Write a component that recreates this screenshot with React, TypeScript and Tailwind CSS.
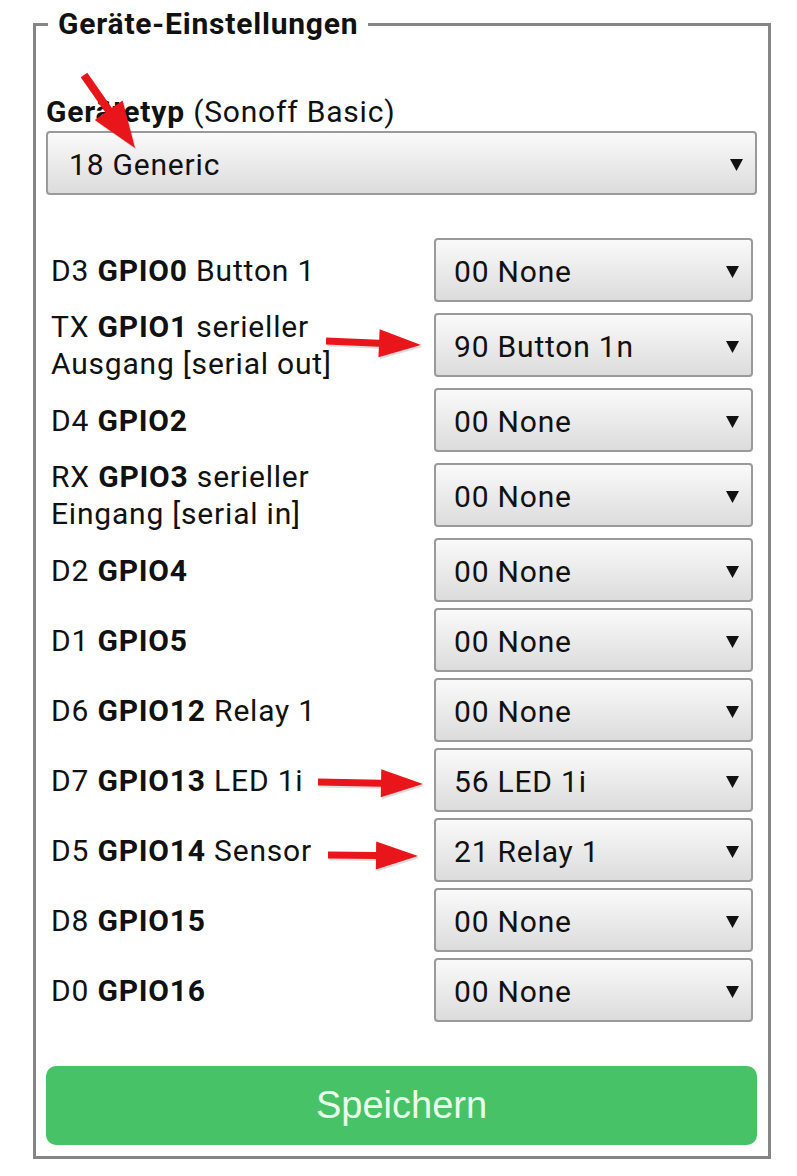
import React from 'react';

type Row = {
  pin: string;
  gpio: string;
  name?: string;
  second?: string;
  value: string;
};

const rows: Row[] = [
  { pin: 'D3', gpio: 'GPIO0', name: 'Button 1', value: '00 None' },
  { pin: 'TX', gpio: 'GPIO1', name: 'serieller', second: 'Ausgang [serial out]', value: '90 Button 1n' },
  { pin: 'D4', gpio: 'GPIO2', value: '00 None' },
  { pin: 'RX', gpio: 'GPIO3', name: 'serieller', second: 'Eingang [serial in]', value: '00 None' },
  { pin: 'D2', gpio: 'GPIO4', value: '00 None' },
  { pin: 'D1', gpio: 'GPIO5', value: '00 None' },
  { pin: 'D6', gpio: 'GPIO12', name: 'Relay 1', value: '00 None' },
  { pin: 'D7', gpio: 'GPIO13', name: 'LED 1i', value: '56 LED 1i' },
  { pin: 'D5', gpio: 'GPIO14', name: 'Sensor', value: '21 Relay 1' },
  { pin: 'D8', gpio: 'GPIO15', value: '00 None' },
  { pin: 'D0', gpio: 'GPIO16', value: '00 None' },
];

const Caret = () => (
  <svg width="13" height="12" viewBox="0 0 13 12" className="shrink-0">
    <polygon points="0,0 13,0 6.5,12" fill="#111" />
  </svg>
);

const FakeSelect = ({ value, className }: { value: string; className: string }) => (
  <div
    className={`flex items-center justify-between h-[64px] pl-[18px] pr-[12px] pt-[3px] rounded-[4px] border-2 border-[#9a9a9a] bg-gradient-to-b from-[#fafafa] to-[#dcdcdc] text-[30px] tracking-[0.8px] text-[#111] ${className}`}
  >
    <span>{value}</span>
    <Caret />
  </div>
);

// red annotation arrow: tail -> tip
const Arrow = ({ x1, y1, x2, y2, head = 42, hw = 14, sw = 3.5 }: { x1: number; y1: number; x2: number; y2: number; head?: number; hw?: number; sw?: number }) => {
  const dx = x2 - x1;
  const dy = y2 - y1;
  const len = Math.sqrt(dx * dx + dy * dy);
  const ux = dx / len;
  const uy = dy / len;
  const nx = -uy;
  const ny = ux;
  const bx = x2 - ux * head;
  const by = y2 - uy * head;
  const pts = [
    [x1 + nx * sw, y1 + ny * sw],
    [bx + nx * sw, by + ny * sw],
    [bx + nx * hw, by + ny * hw],
    [x2, y2],
    [bx - nx * hw, by - ny * hw],
    [bx - nx * sw, by - ny * sw],
    [x1 - nx * sw, y1 - ny * sw],
  ]
    .map((p) => p.join(','))
    .join(' ');
  return (
    <g>
      <polygon points={pts} fill="#00000022" transform="translate(1.5,2)" />
      <polygon points={pts} fill="#e8161b" />
    </g>
  );
};

export default function App() {
  return (
    <div className="relative w-[797px] h-[1176px] bg-white font-['Roboto',sans-serif] text-[#111]">
      <div className="pt-[9px] pl-[33px] w-[771px]">
        <fieldset className="border-[3px] border-[#858585] pl-[10px] pr-[11px] pb-[11px]">
          <legend className="ml-[2px] px-[10px] text-[30px] tracking-[0.8px] leading-[30px] font-bold">
            Geräte-Einstellungen
          </legend>

          <div className="mt-[56px] text-[30px] tracking-[0.8px] leading-[34px]">
            <b>Gerätetyp</b> (Sonoff Basic)
          </div>
          <FakeSelect value="18 Generic" className="mt-[2px] pl-[21px]" />

          <div className="mt-[40px]">
            {rows.map((r, i) => (
              <div key={i} className="flex items-center py-[3px]">
                <div className="flex-1 pl-[5px] text-[30px] tracking-[0.8px] leading-[37px]">
                  {r.pin} <b>{r.gpio}</b>
                  {r.name ? ' ' + r.name : ''}
                  {r.second && (
                    <>
                      <br />
                      {r.second}
                    </>
                  )}
                </div>
                <FakeSelect value={r.value} className="w-[319px] mr-[4px]" />
              </div>
            ))}
          </div>

          <button className="mt-[41px] w-full h-[79px] rounded-[10px] bg-[#47c266] text-[#eaffea] text-[38px] font-['Liberation_Sans',sans-serif]">
            Speichern
          </button>
        </fieldset>
      </div>

      <svg className="absolute inset-0 pointer-events-none" width="797" height="1176">
        <Arrow x1={84} y1={75} x2={135} y2={148} head={46} hw={17} sw={4} />
        <Arrow x1={326} y1={341} x2={421} y2={345} />
        <Arrow x1={318} y1={782} x2={423} y2={784} />
        <Arrow x1={328} y1={855} x2={418} y2={856} />
      </svg>
    </div>
  );
}
